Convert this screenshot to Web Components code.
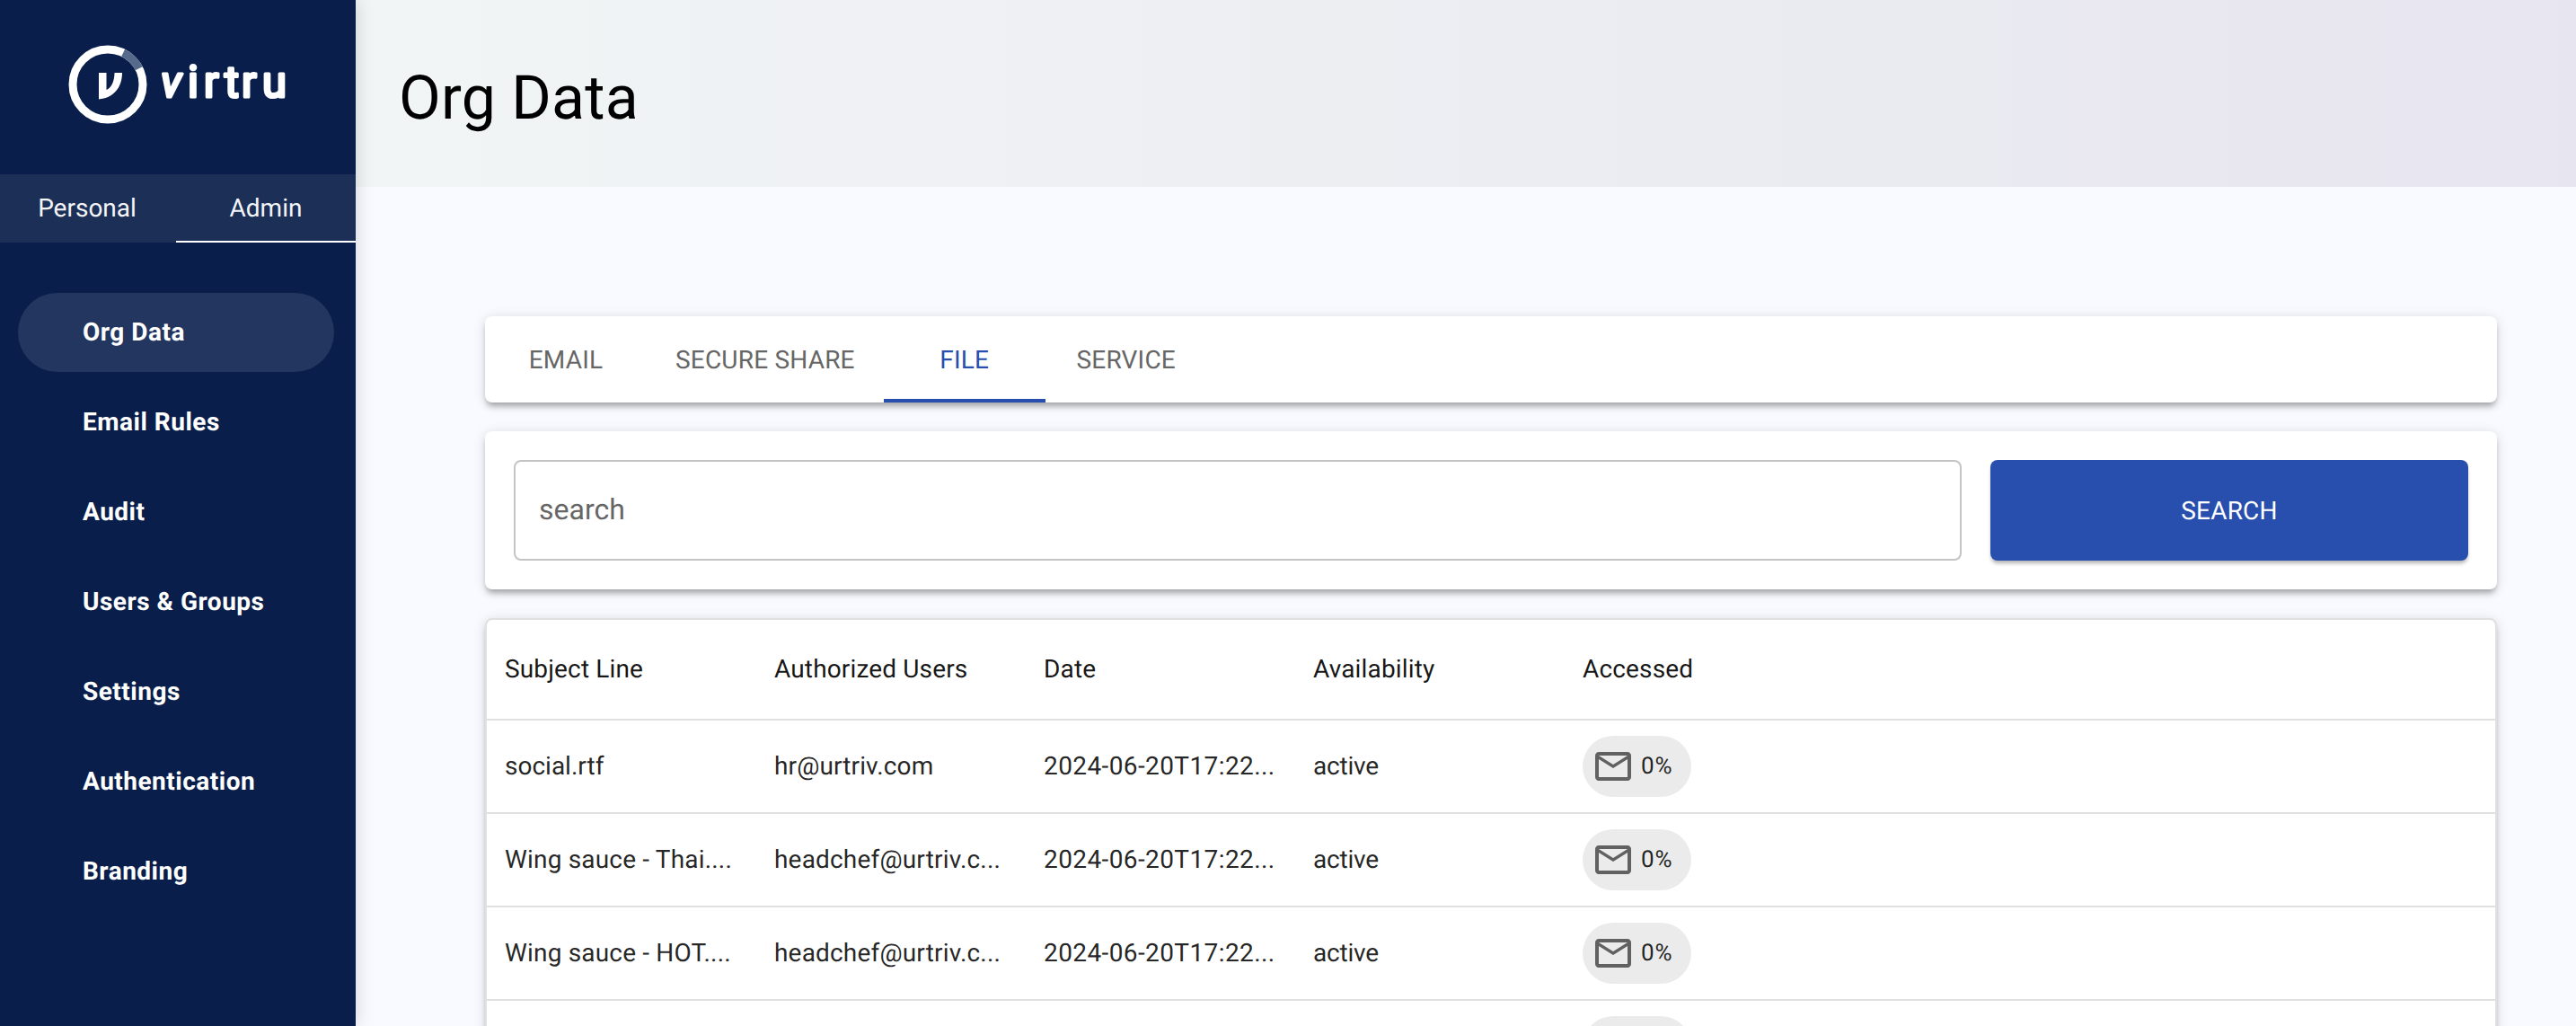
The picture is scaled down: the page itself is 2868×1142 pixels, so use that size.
<!DOCTYPE html>
<html lang="en">
<head>
<meta charset="utf-8">
<title>Org Data</title>
<style>
html,body{margin:0;padding:0;height:1142px;overflow:hidden;background:#f8faff;font-family:Roboto,"Liberation Sans",sans-serif;text-rendering:geometricPrecision;}
</style>
</head>
<body>
<app-shell>
  <side-bar slot="side">
    <nav-item active>Org Data</nav-item>
    <nav-item>Email Rules</nav-item>
    <nav-item>Audit</nav-item>
    <nav-item>Users &amp; Groups</nav-item>
    <nav-item>Settings</nav-item>
    <nav-item>Authentication</nav-item>
    <nav-item>Branding</nav-item>
  </side-bar>
  <page-header>Org Data</page-header>
  <tab-bar>
    <tab-item>EMAIL</tab-item>
    <tab-item>SECURE SHARE</tab-item>
    <tab-item active>FILE</tab-item>
    <tab-item>SERVICE</tab-item>
  </tab-bar>
  <search-card></search-card>
  <data-table>
    <table-row head><span>Subject Line</span><span>Authorized Users</span><span>Date</span><span>Availability</span><span>Accessed</span></table-row>
    <table-row><span>social.rtf</span><span class="s1">hr@urtriv.com</span><span class="date">2024-06-20T17:22...</span><span class="act">active</span><access-chip>0%</access-chip></table-row>
    <table-row><span class="s2">Wing sauce - Thai....</span><span class="s2">headchef@urtriv.c...</span><span class="date">2024-06-20T17:22...</span><span class="act">active</span><access-chip>0%</access-chip></table-row>
    <table-row><span class="s2">Wing sauce - HOT....</span><span class="s2">headchef@urtriv.c...</span><span class="date">2024-06-20T17:22...</span><span class="act">active</span><access-chip>0%</access-chip></table-row>
    <table-row><span></span><span></span><span></span><span></span><access-chip></access-chip></table-row>
  </data-table>
</app-shell>
<script>
function def(name, css, html, extra){
  customElements.define(name, class extends HTMLElement{
    constructor(){super();const r=this.attachShadow({mode:'open'});r.innerHTML='<style>'+css+'</style>'+html;}
    connectedCallback(){ if(extra) extra.call(this); }
  });
}
def('app-shell',`
  :host{display:flex;height:1142px;overflow:hidden;}
  .main{flex:1;min-width:0;display:flex;flex-direction:column;}
  .content{display:flex;flex-direction:column;gap:32px;padding:0 88px 0 144px;}
`,`<slot name="side"></slot><div class="main"><slot name="hdr"></slot><div class="content"><slot></slot></div></div>`,
function(){const h=this.querySelector('page-header');if(h)h.slot='hdr';});

def('side-bar',`
  :host{display:flex;flex-direction:column;flex:0 0 396px;width:396px;height:1142px;background:#091e4a;color:#fff;box-shadow:0 0 20px rgba(0,0,0,.16);position:relative;z-index:2;}
  svg{display:block;flex:none}
  .mode{display:grid;grid-template-columns:194px 202px;height:76px;background:#1c2f56;font-size:28px;box-sizing:border-box;}
  .mode div{display:flex;align-items:center;justify-content:center;box-sizing:border-box;color:#f4f5f8;padding-bottom:1px;}
  .mode .on{border-bottom:2px solid #fff;margin-left:2px;padding-bottom:0;}
  .list{display:flex;flex-direction:column;gap:12px;padding:56px 24px 0 20px;}
`,`
<svg width="396" height="194" viewBox="0 0 396 194" role="img" aria-label="virtru logo">
  <circle cx="120" cy="94" r="39" fill="none" stroke="#fff" stroke-width="9"/>
  <path d="M137.100 58.900A39 39 0 0 1 154.700 76.200" fill="none" stroke="#566a8c" stroke-width="9"/>
  <path d="M110 81h8.500v19c5.500-2 9-10 9-19h8.500c0 17-10 28-26 29.500z" fill="#fff"/>
  <text x="179 209 227 250 269 292" y="107.500" font-family="Roboto,sans-serif" font-size="49" fill="#fff" stroke="#fff" stroke-width="3.200" stroke-linejoin="round"><tspan font-style="italic">v</tspan>irtru</text>
</svg>
<div class="mode"><div>Personal</div><div class="on">Admin</div></div>
<div class="list"><slot></slot></div>`);

def('nav-item',`
  :host{display:flex;align-items:center;height:88px;border-radius:44px;padding:0 0 2px 72px;box-sizing:border-box;font-size:28px;font-weight:700;letter-spacing:.5px;color:#fff;}
  :host([active]){background:#233660;}
`,`<slot></slot>`);

def('page-header',`
  :host{display:flex;align-items:center;flex:none;height:208px;box-sizing:border-box;padding:10px 0 0 48px;font-size:68px;letter-spacing:.25px;font-weight:400;color:#000;background:linear-gradient(90deg,#f1f5f5,#e7e5ef);}
`,`<slot></slot>`);

const cardShadow='0 6px 6px -2px rgba(0,0,0,.28),0 2px 14px 0 rgba(0,0,0,.14)';
def('tab-bar',`
  :host{display:flex;flex:none;height:96px;background:#fff;border-radius:8px;box-shadow:${cardShadow};margin-top:144px;overflow:hidden;}
`,`<slot></slot>`);

def('tab-item',`
  :host{display:flex;align-items:center;justify-content:center;box-sizing:border-box;min-width:180px;padding:0 32px;height:96px;font-size:28px;font-weight:450;letter-spacing:.2px;color:#666;}
  :host([active]){color:#284eae;border-bottom:4px solid #284eae;padding-top:4px;}
`,`<slot></slot>`);

def('search-card',`
  :host{display:flex;flex:none;gap:32px;height:176px;padding:32px;box-sizing:border-box;background:#fff;border-radius:8px;box-shadow:${cardShadow};}
  .field{flex:1;display:flex;align-items:center;height:112px;box-sizing:border-box;border:2px solid #c4c4c4;border-radius:8px;padding:0 0 2px 26px;font-size:32px;color:#666;}
  .btn{flex:0 0 532px;display:flex;align-items:center;justify-content:center;height:112px;border-radius:8px;background:#284eae;color:#fff;font-size:28px;font-weight:450;letter-spacing:.2px;box-shadow:0 4px 4px -1px rgba(0,0,0,.3);}
`,`<div class="field">search</div><div class="btn">SEARCH</div>`);

def('data-table',`
  :host{display:block;flex:none;background:#fff;border:2px solid #e0e0e0;border-radius:8px;box-shadow:${cardShadow};height:600px;box-sizing:border-box;overflow:hidden;}
`,`<slot></slot>`);

def('table-row',`
  :host{display:grid;grid-template-columns:repeat(5,300px);align-items:center;height:104px;box-sizing:border-box;border-bottom:2px solid #e0e0e0;font-size:28px;color:rgba(0,0,0,.87);padding-bottom:2px;}
  :host([head]){height:112px;font-weight:450;letter-spacing:.15px;color:rgba(0,0,0,.92);}
  ::slotted(*){margin-left:20px;white-space:nowrap;}
  ::slotted(.s1){letter-spacing:.12px;}
  ::slotted(.s2){letter-spacing:.18px;}
  ::slotted(.date){letter-spacing:.4px;}
  ::slotted(.act){letter-spacing:-.2px;}
`,`<slot></slot>`);

def('access-chip',`
  :host{display:inline-flex;align-items:center;justify-self:start;box-sizing:border-box;width:121px;height:68px;margin-top:2px;border-radius:34px;background:#ebebeb;padding-left:10px;font-size:26px;letter-spacing:1px;color:rgba(0,0,0,.87);}
  svg{display:block;width:48px;height:48px;fill:#616161;flex:none;margin-right:7px;}
`,`<svg viewBox="0 0 24 24"><path d="M20 4H4c-1.100 0-1.990.9-1.990 2L2 18c0 1.100.9 2 2 2h16c1.100 0 2-.9 2-2V6c0-1.100-.9-2-2-2zm0 14H4V8l8 5 8-5v10zm-8-7L4 6h16l-8 5z"/></svg><slot></slot>`);
</script>
</body>
</html>
